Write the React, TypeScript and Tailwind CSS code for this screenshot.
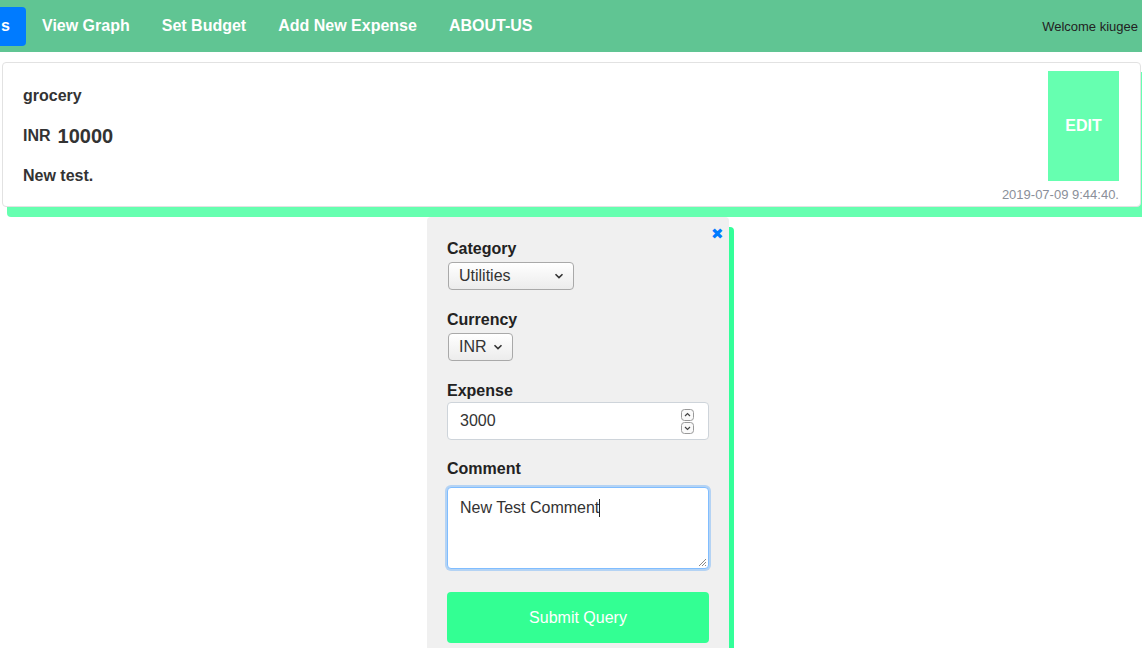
import React from 'react'

function Chevron() {
  return (
    <svg width="10" height="6" viewBox="0 0 10 6" className="shrink-0">
      <path d="M1.5 1.2 L5 4.6 L8.5 1.2" fill="none" stroke="#333" strokeWidth="1.6" />
    </svg>
  )
}

function Spinner() {
  return (
    <div className="flex flex-col gap-[1px]">
      <svg width="13" height="12" viewBox="0 0 13 12">
        <rect x="0.5" y="0.5" width="12" height="11" rx="3" fill="#fafafa" stroke="#999" />
        <path d="M4 7 L6.5 4.5 L9 7" fill="none" stroke="#444" strokeWidth="1.2" />
      </svg>
      <svg width="13" height="12" viewBox="0 0 13 12">
        <rect x="0.5" y="0.5" width="12" height="11" rx="3" fill="#fafafa" stroke="#999" />
        <path d="M4 5 L6.5 7.5 L9 5" fill="none" stroke="#444" strokeWidth="1.2" />
      </svg>
    </div>
  )
}

export default function App() {
  const font = { fontFamily: '"Liberation Sans", Arial, sans-serif' }
  return (
    <div className="min-h-[648px] bg-white overflow-hidden" style={font}>
      <nav className="flex items-center h-[52px] bg-[#60c593]">
        <div className="w-[26px] h-[39px] bg-[#007bff] rounded-r-[4px] flex items-center text-white font-bold text-[16px] pl-[1px]">
          s
        </div>
        <a className="px-4 text-white font-bold text-[16px]">View Graph</a>
        <a className="px-4 text-white font-bold text-[16px]">Set Budget</a>
        <a className="px-4 text-white font-bold text-[16px]">Add New Expense</a>
        <a className="px-4 text-white font-bold text-[16px]">ABOUT-US</a>
        <span className="ml-auto pr-[4px] text-[13px] text-[#222] pt-[1px]">Welcome kiugee</span>
      </nav>

      <div className="ml-[2px] mr-[1px] mt-[10px] h-[145px] border border-[#e2e2e2] rounded-[4px] bg-white shadow-[5px_10px_0_#66ffb0] flex">
        <div className="flex-1 pl-[20px] pt-[13px] text-[#333] font-bold">
          <div className="h-[40px] flex items-center text-[16px]">grocery</div>
          <div className="h-[40px] flex items-center gap-[7px]">
            <span className="text-[16px]">INR</span>
            <span className="text-[20px]">10000</span>
          </div>
          <div className="h-[40px] flex items-center text-[16px]">New test.</div>
        </div>
        <div className="flex flex-col items-end pr-[21px] pt-[8px]">
          <button className="w-[71px] h-[110px] bg-[#66ffb0] text-white font-bold text-[16px]">EDIT</button>
          <div className="mt-[4px] text-[13px] text-[#8a8f99]">2019-07-09 9:44:40.</div>
        </div>
      </div>

      <div className="relative ml-[427px] mt-[10px] w-[302px] h-[440px] bg-[#f0f0f0] rounded-t-[4px] shadow-[5px_10px_0_#33ff99] pl-[20px] pt-[23px]">
        <span className="absolute right-[5px] top-[9px] text-[#007bff] text-[15px] leading-none">✖</span>
        <div className="text-[16px] font-bold text-[#222] leading-[18px]">Category</div>
        <div className="mt-[4px] ml-[1px] w-[126px] h-[28px] rounded-[4px] border border-[#a9a9a9] bg-gradient-to-b from-white to-[#ececec] flex items-center justify-between pl-[10px] pr-[9px] text-[16px] text-[#333]">
          <span>Utilities</span>
          <Chevron />
        </div>

        <div className="mt-[21px] text-[16px] font-bold text-[#222] leading-[18px]">Currency</div>
        <div className="mt-[4px] ml-[1px] w-[65px] h-[28px] rounded-[4px] border border-[#a9a9a9] bg-gradient-to-b from-white to-[#ececec] flex items-center justify-between pl-[10px] pr-[9px] text-[16px] text-[#333]">
          <span>INR</span>
          <Chevron />
        </div>

        <div className="mt-[21px] text-[16px] font-bold text-[#222] leading-[18px]">Expense</div>
        <div className="mt-[2px] w-[262px] h-[38px] rounded-[4px] border border-[#ced4da] bg-white flex items-center justify-between pl-[12px] pr-[14px] text-[16px] text-[#333]">
          <span>3000</span>
          <Spinner />
        </div>

        <div className="mt-[20px] text-[16px] font-bold text-[#222] leading-[18px]">Comment</div>
        <div className="relative mt-[9px] w-[262px] h-[82px] rounded-[4px] border border-[#80bdff] bg-white shadow-[0_0_0_2px_rgba(0,123,255,0.25)] pl-[12px] pt-[8px] text-[16px] text-[#333]">
          <span>New Test Comment</span>
          <span className="inline-block w-[1px] h-[18px] bg-[#222] align-[-4px]" />
          <svg className="absolute right-[1px] bottom-[1px]" width="9" height="9" viewBox="0 0 9 9">
            <path d="M8 1 L1 8 M8 4 L4 8 M8 7 L7 8" stroke="#888" strokeWidth="1" />
          </svg>
        </div>

        <button className="mt-[23px] w-[262px] h-[51px] rounded-[4px] bg-[#33ff93] text-white text-[16px]">
          Submit Query
        </button>
      </div>
    </div>
  )
}
